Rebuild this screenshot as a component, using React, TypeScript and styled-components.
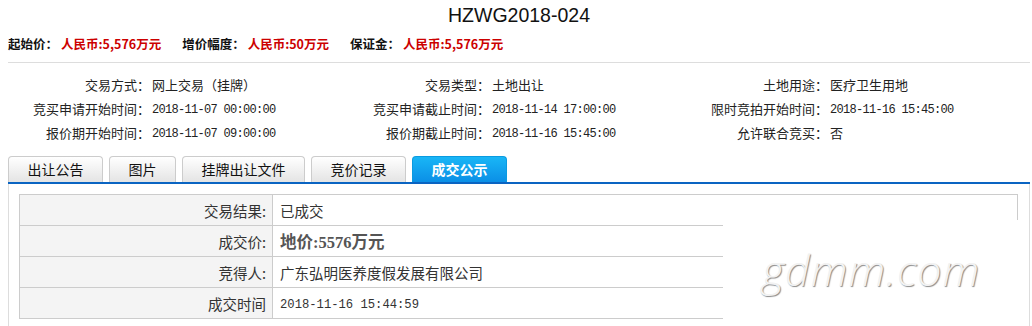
import styled, { createGlobalStyle } from "styled-components";

const GlobalStyle = createGlobalStyle`
  body {
    margin: 0;
    background: #fff;
    font-family: "Noto Sans CJK SC", "Liberation Sans", sans-serif;
    color: #222;
  }
`;

const prices = [
  { label: "起始价：", value: "人民币:5,576万元" },
  { label: "增价幅度：", value: "人民币:50万元" },
  { label: "保证金：", value: "人民币:5,576万元" }
];

const info = [
  ["交易方式：", "网上交易（挂牌）", false],
  ["交易类型：", "土地出让", false],
  ["土地用途：", "医疗卫生用地", false],
  ["竞买申请开始时间：", "2018-11-07 00:00:00", true],
  ["竞买申请截止时间：", "2018-11-14 17:00:00", true],
  ["限时竞拍开始时间：", "2018-11-16 15:45:00", true],
  ["报价期开始时间：", "2018-11-07 09:00:00", true],
  ["报价期截止时间：", "2018-11-16 15:45:00", true],
  ["允许联合竞买：", "否", false]
] as const;

const tabs = ["出让公告", "图片", "挂牌出让文件", "竞价记录", "成交公示"];

const App = () => (
  <>
    <GlobalStyle />
    <Page>
      <Title>HZWG2018-024</Title>
      <PriceRow>
        {prices.map(p => (
          <PriceItem key={p.label}>
            {p.label}
            <PriceValue>{p.value}</PriceValue>
          </PriceItem>
        ))}
      </PriceRow>
      <InfoGrid>
        {info.map(([label, value, mono]) => (
          <InfoPair key={label}>
            <InfoLabel>{label}</InfoLabel>
            <InfoValue mono={mono}>{value}</InfoValue>
          </InfoPair>
        ))}
      </InfoGrid>
      <TabBar>
        {tabs.map((t, i) => (
          <Tab key={t} active={i === tabs.length - 1}>
            {t}
          </Tab>
        ))}
      </TabBar>
      <Content>
        <ResultTable>
          <tbody>
            <tr>
              <LabelCell>交易结果:</LabelCell>
              <ValueCell>已成交</ValueCell>
            </tr>
            <tr>
              <LabelCell>成交价:</LabelCell>
              <ValueCell>
                <PriceText>地价:5576万元</PriceText>
              </ValueCell>
            </tr>
            <tr>
              <LabelCell>竞得人:</LabelCell>
              <ValueCell>广东弘明医养度假发展有限公司</ValueCell>
            </tr>
            <tr>
              <LabelCell>成交时间</LabelCell>
              <ValueCell mono>2018-11-16 15:44:59</ValueCell>
            </tr>
          </tbody>
        </ResultTable>
        <Watermark>gdmm.com</Watermark>
      </Content>
    </Page>
  </>
);

const Page = styled.div`
  padding: 2px 2px 0 8px;
  height: 324px;
  overflow: hidden;
`;

const Title = styled.div`
  height: 26px;
  line-height: 26px;
  text-align: center;
  font-family: "Liberation Sans", sans-serif;
  font-size: 19.5px;
  color: #111;
`;

const PriceRow = styled.div`
  display: flex;
  align-items: center;
  height: 24px;
  margin-top: 3px;
  padding-bottom: 7px;
  border-bottom: 1px solid #dddddd;
`;

const PriceItem = styled.span`
  font-size: 12.5px;
  font-weight: bold;
  color: #111;
  margin-right: 21px;
  white-space: nowrap;
`;

const PriceValue = styled.span`
  color: #cc0000;
  margin-left: 3px;
`;

const InfoGrid = styled.div`
  display: grid;
  grid-template-columns: 342px 340px 1fr;
  grid-auto-rows: 24px;
  padding-top: 9px;
`;

const InfoPair = styled.div`
  display: grid;
  grid-template-columns: 142px 1fr;
  align-items: center;
  &:nth-child(3n + 2) {
    grid-template-columns: 140px 1fr;
  }
  &:nth-child(3n) {
    grid-template-columns: 138px 1fr;
  }
`;

const InfoLabel = styled.span`
  text-align: right;
  font-size: 13px;
  color: #222;
  white-space: nowrap;
`;

const InfoValue = styled.span<{ mono: boolean }>`
  padding-left: 2px;
  padding-top: ${({ mono }) => (mono ? "3px" : "0")};
  font-size: ${({ mono }) => (mono ? "12px" : "13px")};
  letter-spacing: ${({ mono }) => (mono ? "-0.7px" : "0")};
  font-family: ${({ mono }) =>
    mono
      ? `"Liberation Mono", monospace`
      : `"Noto Sans CJK SC", sans-serif`};
  color: #222;
  white-space: nowrap;
`;

const TabBar = styled.div`
  display: flex;
  gap: 6px;
  margin-top: 12px;
  height: 26px;
  border-bottom: 2px solid #0a64c2;
  align-items: flex-end;
`;

const Tab = styled.div<{ active: boolean }>`
  height: 25px;
  line-height: 25px;
  padding: 0 18.5px;
  font-size: 14px;
  border: 1px solid ${({ active }) => (active ? "#0a9be0" : "#cccccc")};
  border-bottom: none;
  border-radius: 4px 4px 0 0;
  background: ${({ active }) =>
    active
      ? "linear-gradient(#19b6f6, #0b8fe6)"
      : "linear-gradient(#ffffff, #e4e4e4)"};
  color: ${({ active }) => (active ? "#fff" : "#111")};
  font-weight: ${({ active }) => (active ? "bold" : "normal")};
  white-space: nowrap;
`;

const Content = styled.div`
  position: relative;
  border-left: 1px solid #dddddd;
  border-right: 1px solid #dddddd;
  padding: 10px 11px 20px 10px;
`;

const ResultTable = styled.table`
  width: 100%;
  border-collapse: collapse;
  border: 1px solid #cccccc;
`;

const LabelCell = styled.td`
  width: 246px;
  height: 30px;
  padding: 0 6px 0 0;
  text-align: right;
  background: #f4f4f4;
  border: 1px solid #cccccc;
  font-size: 14.5px;
  color: #333;
`;

const ValueCell = styled.td<{ mono?: boolean }>`
  padding: ${({ mono }) => (mono ? "3px 0 0 7px" : "0 0 0 7px")};
  border: 1px solid #cccccc;
  font-size: ${({ mono }) => (mono ? "12.2px" : "14.5px")};
  font-family: ${({ mono }) =>
    mono ? `"Liberation Mono", monospace` : `"Noto Sans CJK SC", sans-serif`};
  color: #333;
`;

const PriceText = styled.span`
  font-family: "Liberation Serif", "Noto Sans CJK SC", serif;
  font-weight: bold;
  font-size: 16.5px;
  color: #555;
`;

const Watermark = styled.div`
  position: absolute;
  left: 714px;
  top: 36px;
  width: 300px;
  height: 120px;
  background: #fff;
  padding-left: 39px;
  padding-top: 20px;
  box-sizing: border-box;
  font-family: "Open Sans", sans-serif;
  font-style: italic;
  font-weight: 300;
  font-size: 43px;
  letter-spacing: 1px;
  color: #f2f2f2;
  text-shadow: 1px 1px 1px #8a8a8a;
`;

export default App;
